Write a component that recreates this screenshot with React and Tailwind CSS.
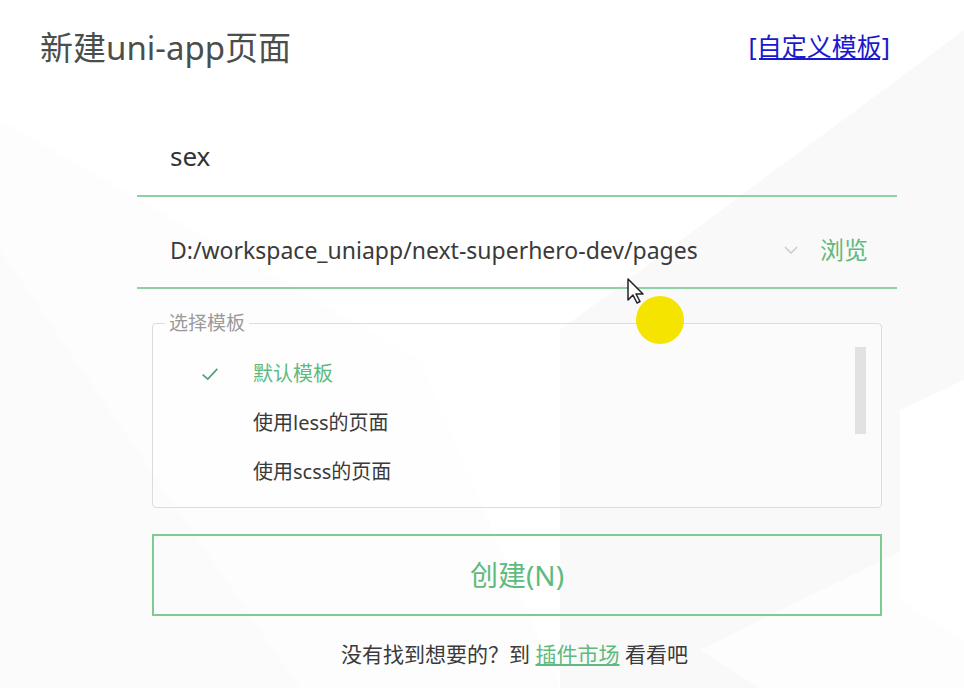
import React from 'react';

const FONT = { fontFamily: '"Noto Sans", "Noto Sans CJK SC", sans-serif' };

function Background() {
  // faint geometric shapes behind the dialog
  return (
    <svg className="absolute inset-0 h-full w-full" viewBox="0 0 964 688" preserveAspectRatio="none">
      <polygon points="0,250 0,688 300,688" fill="#fafbfb" />
      <polygon points="0,120 420,360 560,688 0,688" fill="#fbfbfc" opacity="0.6" />
      <polygon points="560,330 964,30 964,688 560,688" fill="#f9f9fa" />
      <polygon points="900,410 964,380 964,640 900,600" fill="#ffffff" />
      <polygon points="700,650 964,520 964,688 760,688" fill="#ffffff" opacity="0.7" />
    </svg>
  );
}

function TemplateItem({ label, active }) {
  return (
    <div className="flex h-[49px] items-center">
      <div className="flex w-[100px] justify-end pr-[34px]">
        {active && (
          <svg className="h-[18px] w-[18px] text-[#4f9f78]" viewBox="0 0 16 16" fill="none" stroke="currentColor" strokeWidth="1.5">
            <path d="M1.5 8.5l4.5 4 8.5-9" />
          </svg>
        )}
      </div>
      <span className={active ? 'text-[20px] text-[#5fba7d]' : 'text-[20px] text-[#3a3a3a]'}>{label}</span>
    </div>
  );
}

export default function App() {
  return (
    <div className="relative h-[688px] w-[964px] overflow-hidden bg-white" style={FONT}>
      <Background />

      <div className="relative flex flex-col">
        {/* Header */}
        <div className="flex items-start justify-between pl-[40px] pr-[74px] pt-[26px]">
          <h1 className="text-[33px] leading-[44px] text-[#4b4f4c]">新建uni-app页面</h1>
          <a className="mt-[2px] text-[25px] leading-[36px] text-[#1a1acc] underline underline-offset-2">
            [自定义模板]
          </a>
        </div>

        {/* Form */}
        <div className="ml-[137px] mt-[48px] w-[760px]">
          <div className="flex h-[79px] items-center border-b-2 border-[#8fd1a5] pb-[1px] pl-[33px] text-[26px] text-[#333]">
            sex
          </div>
          <div className="flex h-[92px] items-center border-b-2 border-[#8fd1a5] pl-[33px] pr-[29px] pt-[16px]">
            <span className="flex-1 text-[23px] text-[#3a3a3a]">D:/workspace_uniapp/next-superhero-dev/pages</span>
            <svg className="mr-[20px] h-[10px] w-[18px] text-[#c8c8c8]" viewBox="0 0 18 10" fill="none" stroke="currentColor" strokeWidth="1.3">
              <path d="M3 2l6 6 6-6" />
            </svg>
            <span className="text-[24px] text-[#5fba7d]">浏览</span>
          </div>

          <fieldset className="ml-[15px] mt-[23px] h-[196px] w-[730px] rounded-[4px] border border-[#dcdcdc] bg-white/40">
            <legend className="ml-[12px] px-[4px] text-[19px] leading-[22px] text-[#9a9a9a]">选择模板</legend>
            <div className="flex">
              <div className="flex-1 pt-[15px]">
                <TemplateItem label="默认模板" active />
                <TemplateItem label="使用less的页面" />
                <TemplateItem label="使用scss的页面" />
              </div>
              <div className="mr-[15px] mt-[13px] h-[87px] w-[11px] bg-[#e2e2e2]" />
            </div>
          </fieldset>

          <button className="ml-[15px] mt-[26px] flex h-[82px] w-[730px] items-center justify-center border-2 border-[#7ccb95] text-[28px] text-[#5fba7d]">
            创建(N)
          </button>

          <p className="mt-[23px] pr-[5px] text-center text-[21px] text-[#3a3a3a]">
            没有找到想要的？到 <a className="text-[#5fba7d] underline underline-offset-2">插件市场</a> 看看吧
          </p>
        </div>
      </div>

      {/* recording cursor highlight */}
      <div className="absolute left-[636px] top-[296px] h-[48px] w-[48px] rounded-full bg-[#f5e400]" />
      <svg className="absolute left-[627px] top-[278px]" width="20" height="28" viewBox="0 0 20 28">
        <path d="M1 1v21l5-5 4 8 3-1.5-4-7.5h7z" fill="#fff" stroke="#222" strokeWidth="1.5" strokeLinejoin="round" />
      </svg>
    </div>
  );
}
